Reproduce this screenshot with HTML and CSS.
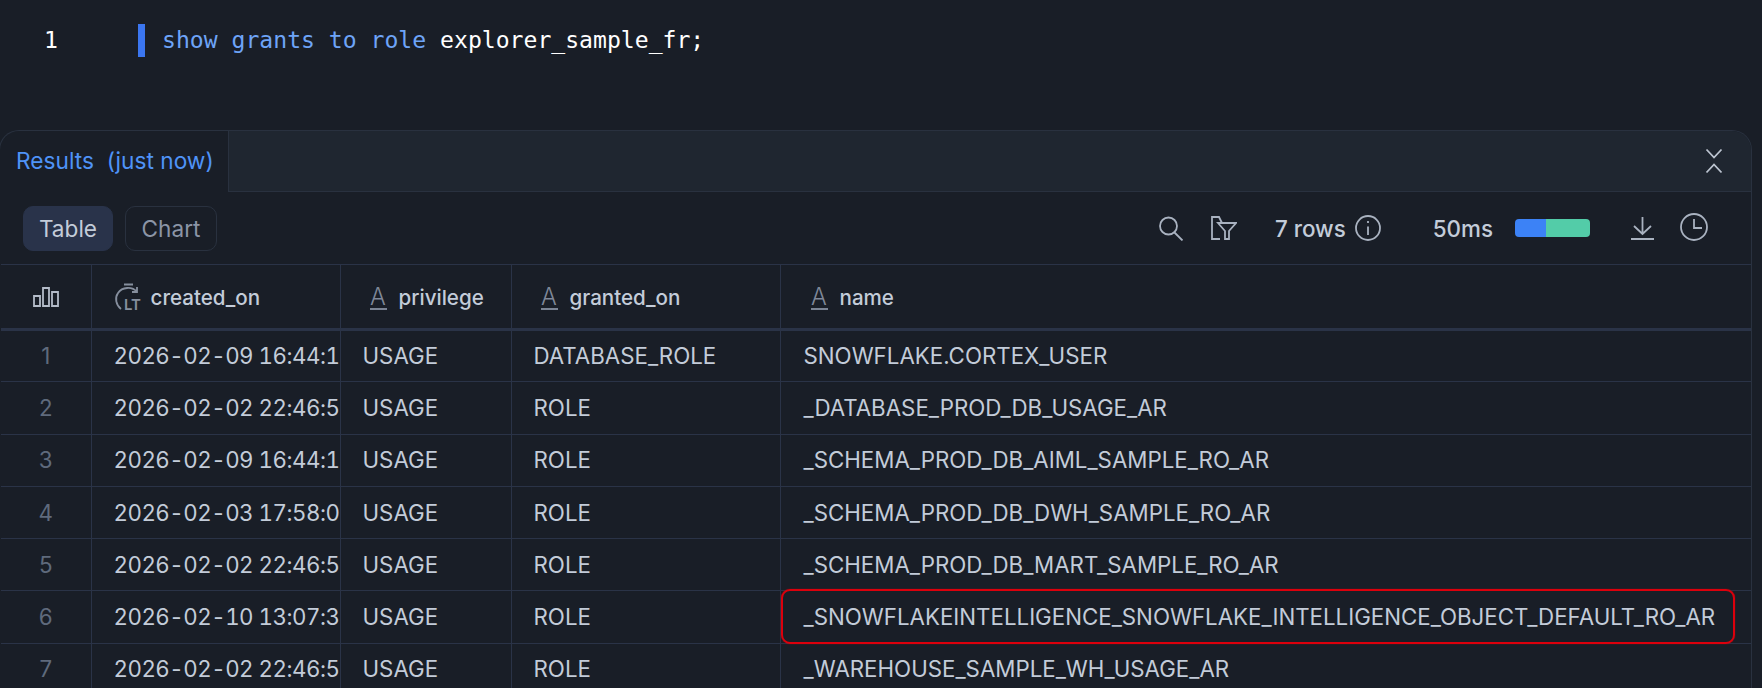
FILE: index.html
```html
<!DOCTYPE html>
<html lang="en">
<head>
<meta charset="utf-8">
<title>Results</title>
<link rel="stylesheet" href="styles.css">
</head>
<body>
<section class="editor">
  <span class="line-no">1</span>
  <span class="active-bar"></span>
  <code class="sql"><span class="kw">show grants to role</span> explorer_sample_fr;</code>
</section>
<section class="panel">
  <div class="tabbar">
    <div class="tab">Results&nbsp; (just now)</div>
    <div class="tabbar-rest">
      <svg class="ico-collapse" width="18" height="26" viewBox="0 0 18 26"><path d="M1.500 1.500 9 9.500l7.500-8M1.500 24.500 9 16.500l7.500 8"/></svg>
    </div>
  </div>
  <div class="toolbar">
    <div class="seg">
      <button class="seg-btn on">Table</button>
      <button class="seg-btn">Chart</button>
    </div>
    <div class="tools">
      <svg class="ico ico-search" width="26" height="25" viewBox="0 0 26 25"><circle cx="10.500" cy="10" r="8.500"/><path d="m16.500 16.500 8 8"/></svg>
      <svg class="ico ico-filter" width="26" height="24" viewBox="0 0 26 24"><path d="M9 23H1V1h7l3 6M7 7h18l-7 8v8h-4v-8z"/></svg>
      <span class="rows">7 rows</span>
      <svg class="ico ico-info" width="26" height="26" viewBox="0 0 26 26"><circle cx="13" cy="13" r="12"/><path d="M13 11.500V20M13 6v2"/></svg>
      <span class="ms">50ms</span>
      <span class="bar"><span class="bar-a"></span><span class="bar-b"></span></span>
      <svg class="ico ico-dl" width="23" height="23" viewBox="0 0 23 23"><path d="M11.500 0v16M3 9l8.500 8L20 9M0 22h23"/></svg>
      <svg class="ico ico-clock" width="28" height="28" viewBox="0 0 28 28"><circle cx="14" cy="14" r="13"/><path d="M14 6v9h8"/></svg>
    </div>
  </div>
  <table class="grid">
    <colgroup><col class="c0"><col class="c1"><col class="c2"><col class="c3"><col class="c4"></colgroup>
    <thead>
      <tr>
        <th class="idx"><svg class="ico ico-cols" width="26" height="20" viewBox="0 0 26 20"><path d="M1 9h6v10H1zM10 1h6v18h-6zM19 5h6v14h-6z"/></svg></th>
        <th><span class="hd"><svg class="ico-time" width="30" height="28" viewBox="0 0 30 28"><path d="M9 1.500h9M6 26C1 22-.5 15 3 10c4-6 14-7 19-1M22 4v5h-5"/><text x="9" y="27" class="lt">LT</text></svg>created_on</span></th>
        <th><span class="hd hd-a"><span class="a-ico">A</span>privilege</span></th>
        <th><span class="hd hd-a"><span class="a-ico">A</span>granted_on</span></th>
        <th><span class="hd hd-a hd-name"><span class="a-ico">A</span>name</span></th>
      </tr>
    </thead>
    <tbody>
      <tr><td class="idx">1</td><td class="ts">2026-02-09 16:44:1</td><td>USAGE</td><td>DATABASE_ROLE</td><td>SNOWFLAKE.CORTEX_USER</td></tr>
      <tr><td class="idx">2</td><td class="ts">2026-02-02 22:46:5</td><td>USAGE</td><td>ROLE</td><td>_DATABASE_PROD_DB_USAGE_AR</td></tr>
      <tr><td class="idx">3</td><td class="ts">2026-02-09 16:44:1</td><td>USAGE</td><td>ROLE</td><td>_SCHEMA_PROD_DB_AIML_SAMPLE_RO_AR</td></tr>
      <tr><td class="idx">4</td><td class="ts">2026-02-03 17:58:0</td><td>USAGE</td><td>ROLE</td><td>_SCHEMA_PROD_DB_DWH_SAMPLE_RO_AR</td></tr>
      <tr><td class="idx">5</td><td class="ts">2026-02-02 22:46:5</td><td>USAGE</td><td>ROLE</td><td>_SCHEMA_PROD_DB_MART_SAMPLE_RO_AR</td></tr>
      <tr><td class="idx">6</td><td class="ts">2026-02-10 13:07:3</td><td>USAGE</td><td>ROLE</td><td class="marked">_SNOWFLAKEINTELLIGENCE_SNOWFLAKE_INTELLIGENCE_OBJECT_DEFAULT_RO_AR<span class="redbox"></span></td></tr>
      <tr><td class="idx">7</td><td class="ts">2026-02-02 22:46:5</td><td>USAGE</td><td>ROLE</td><td>_WAREHOUSE_SAMPLE_WH_USAGE_AR</td></tr>
    </tbody>
  </table>
</section>
</body>
</html>
```
FILE: styles.css
```css
* { box-sizing: border-box; }
html, body { margin: 0; height: 688px; overflow: hidden; background: #191e27; }
body { font-family: Inter, "Liberation Sans", sans-serif; color: #c3ccd9; }

.editor { height: 130px; display: flex; align-items: flex-start; padding-top: 24px; }
.line-no { width: 138px; padding-left: 44px; font: 23.100px/32px "DejaVu Sans Mono", monospace; color: #fff; }
.active-bar { width: 7px; height: 33px; background: #3b76f0; }
.sql { margin-left: 17px; font: 23.100px/32px "DejaVu Sans Mono", monospace; color: #fff; white-space: pre; }
.kw { color: #6ea4f7; }

.panel { width: 1753px; height: 558px; margin-left: -1px; padding-left: 1px; border: 1px solid #29313f; border-bottom: 0; border-radius: 20px 20px 0 0; overflow: hidden; }

.tabbar { display: flex; height: 61px; }
.tab { width: 228px; border-right: 1px solid #29313f; padding-left: 15px; font-size: 22.700px; line-height: 60px; color: #4f93f7; white-space: nowrap; }
.tabbar-rest { flex: 1; display: flex; align-items: center; justify-content: flex-end; padding-right: 28px; background: #1f2630; border-bottom: 1px solid #29313f; }
.ico-collapse path { fill: none; stroke: #bcc4d0; stroke-width: 1.800; }

.toolbar { height: 72px; display: flex; align-items: center; justify-content: space-between; padding: 0 43px 0 22px; }
.seg { display: flex; gap: 12px; }
.seg-btn { width: 92px; height: 45px; padding: 0; font: 22.600px Inter, sans-serif; color: #8b95a6; background: transparent; border: 1px solid #29313f; border-radius: 10px; }
.seg-btn.on { width: 90px; color: #c3ccd9; background: #29334a; border-color: #29334a; }

.tools { display: flex; align-items: center; font-size: 22.400px; color: #c3ccd9; }
.ico path, .ico circle { fill: none; stroke: #a9b2c0; stroke-width: 1.800; }
.ico-filter { margin-left: 27px; }
.rows { margin-left: 38px; font-weight: 500; }
.ico-info { margin-left: 9px; }
.ms { margin-left: 52px; font-weight: 500; }
.bar { display: flex; width: 75px; height: 18px; margin-left: 22px; border-radius: 4px; overflow: hidden; }
.bar-a { width: 31px; background: #3c82f6; }
.bar-b { flex: 1; background: #53cca8; }
.ico-dl { margin-left: 41px; }
.ico-clock { margin: -2px 0 0 26px; }

.grid { width: 1751px; table-layout: fixed; border-collapse: collapse; font-size: 22.300px; }
.c0 { width: 90px; } .c1 { width: 249px; } .c2 { width: 171px; } .c3 { width: 269px; }
.grid th, .grid td { border: 1px solid #2a3347; padding: 0 0 0 23px; white-space: nowrap; text-align: left; }
.grid tr > :first-child { border-left: 0; }
.grid th { height: 65px; padding-top: 2px; border-bottom: 3px solid #2a3347; font-size: 20.600px; font-weight: 500; color: #c3ccd9; }
.grid td { height: 52.300px; font-weight: 400; overflow: hidden; padding-bottom: 1px; }
.grid td:nth-child(3), .grid td:nth-child(4) { padding-left: 22px; }
.grid td.ts { padding-left: 22px; font-variant-numeric: tabular-nums; letter-spacing: -0.500px; }
.grid .idx { padding: 0 0 1px; text-align: center; }
.grid td.idx { color: #5f6a7c; }
.ico-cols { display: block; margin: 1px auto 0; }
.ico-cols path { stroke: #b4bcc9; }

.hd { display: flex; align-items: center; }
.hd-a { padding-left: 6px; }
.hd-name { padding-left: 7px; }
.ico-time { margin: -2px 6px 0 0; flex: none; overflow: visible; }
.ico-time path { fill: none; stroke: #868f9e; stroke-width: 1.800; }
.lt { font: 600 15px Inter, sans-serif; fill: #868f9e; }
.a-ico { display: block; width: 17px; margin-right: 12px; border-bottom: 2px solid #7b8494; font-size: 23.500px; line-height: 23px; text-align: center; font-weight: 300; color: #7f8899; }

.grid .marked { position: relative; overflow: visible; }
.redbox { position: absolute; left: 0; top: -2px; width: 954px; height: 55px; border: 2px solid #dc000c; border-radius: 9px; box-shadow: 0 0 1px #dc000c; }
```
